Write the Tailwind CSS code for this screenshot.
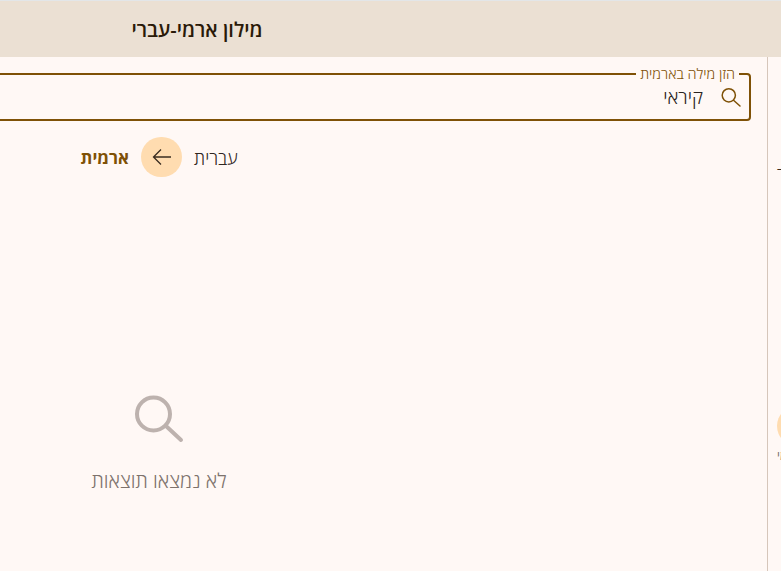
<!DOCTYPE html>
<html lang="he" dir="rtl">
<head>
<meta charset="utf-8">
<script src="https://cdn.jsdelivr.net/npm/@tailwindcss/browser@4"></script>
</head>
<body class="overflow-hidden bg-[#fff8f5] font-['Open_Sans','Liberation_Sans',sans-serif]">
<div class="h-[571px] w-[781px] overflow-hidden" dir="ltr">
<div class="ml-[-449px] flex h-[571px] w-[1292px] flex-col" dir="rtl">
  <div class="h-px shrink-0 bg-[#e3e6e8]"></div>
  <header class="flex h-[56px] shrink-0 items-center justify-center bg-[#ebe0d3] pt-[2px]">
    <h1 class="text-xl font-semibold text-[#2a1a08]">מילון ארמי-עברי</h1>
  </header>
  <div class="flex min-h-0 flex-1">
    <nav class="relative flex w-[76px] shrink-0 flex-col items-center overflow-hidden border-l border-[#d6c6ba] pr-[17px] text-[#3a2c20]">
      <span class="mt-[105px] h-[22px] whitespace-nowrap text-base leading-[22px]">תלמוד</span>
      <span class="mt-[222px] size-10 shrink-0 rounded-full bg-[#ffdcb0]"></span>
      <span class="mt-[2px] whitespace-nowrap text-xs text-[#77706a]">דף ארמי</span>
    </nav>
    <main class="flex min-w-0 flex-1 flex-col items-center">
      <div class="relative mt-[16px] mr-[16px] h-[48px] w-[1200px] self-start rounded border-2 border-[#7f5106]">
        <span class="absolute -top-[9px] right-[10px] bg-[#fff8f5] px-1 text-[14.500px] leading-[16px] font-light text-[#7f5106]">הזן מילה בארמית</span>
        <div class="flex h-full items-center gap-[16px] pr-[6px]">
          <svg class="size-6 shrink-0 text-[#7f5106]" viewBox="0 0 24 24" fill="none" stroke="currentColor" stroke-width="1.500" stroke-linecap="round"><circle cx="9.800" cy="10.300" r="6.600"/><path d="M14.500 15.200 21 21"/></svg>
          <span class="text-[19px] font-light text-[#2a2320]">קיראי</span>
        </div>
      </div>
      <div class="mt-[16px] flex h-10 items-center gap-3 pt-px">
        <span class="text-lg font-light text-[#2f2620]">עברית</span>
        <span class="-mt-px flex h-10 w-[41px] items-center justify-center rounded-full bg-[#ffdcb0]">
          <svg class="size-6 text-[#3a2c20]" viewBox="0 0 24 24" fill="none" stroke="currentColor" stroke-width="1.300"><path d="M21 12H3.500M11 4.500 3.500 12l7.500 7.500"/></svg>
        </span>
        <span class="text-[17px] font-bold text-[#7f5106]">ארמית</span>
      </div>
      <div class="mt-[213px] flex flex-col items-center gap-[13px]">
        <svg class="size-[64px] text-[#bdb2ae]" viewBox="0 0 64 64" fill="none" stroke="currentColor" stroke-width="4" stroke-linecap="round"><circle cx="26.500" cy="24" r="16.500"/><path d="M39 36 54 50"/></svg>
        <p class="text-xl font-light text-[#7d726c]">לא נמצאו תוצאות</p>
      </div>
    </main>
  </div>
</div>
</div>
</body>
</html>
